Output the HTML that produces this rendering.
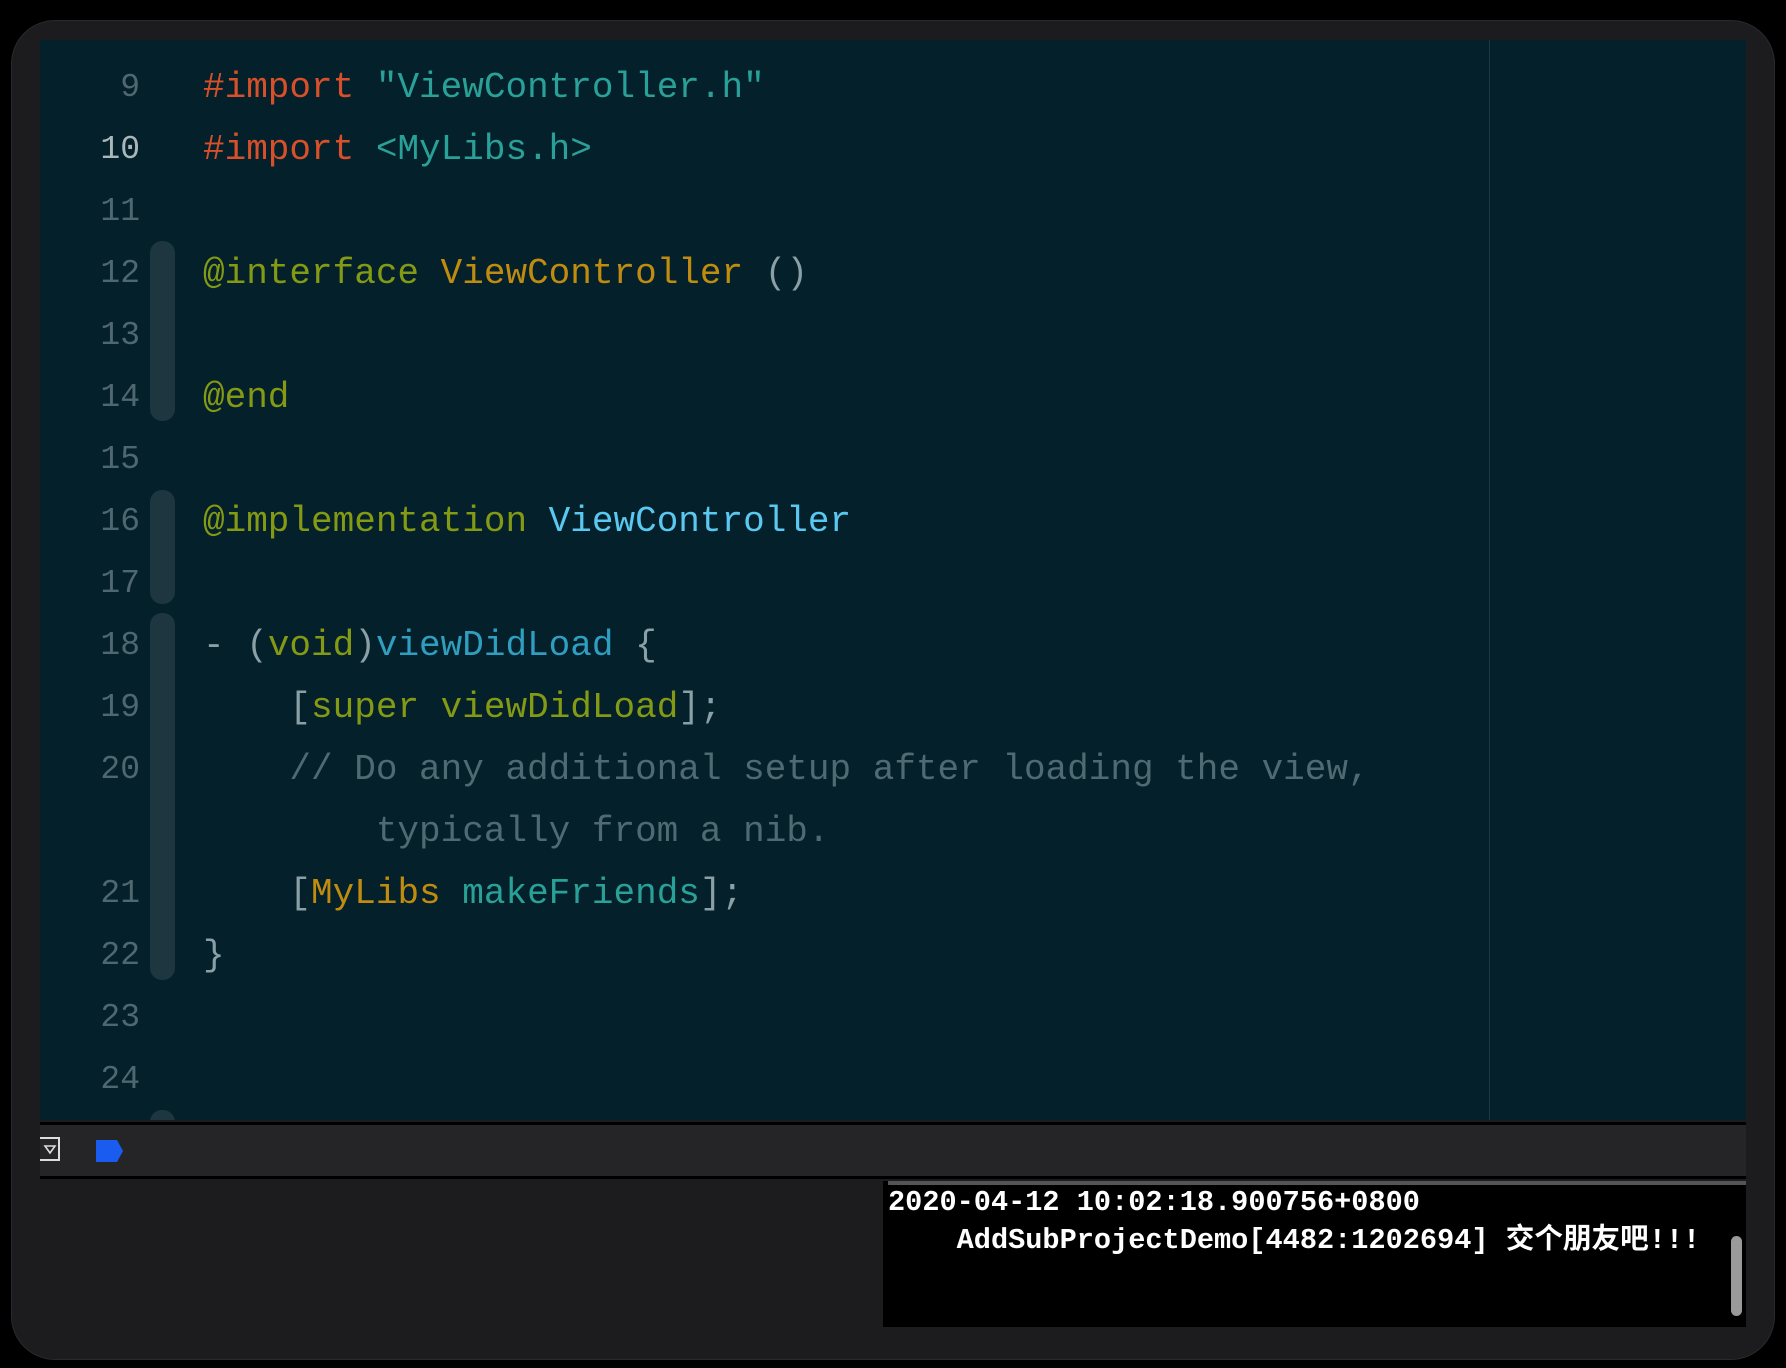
<!DOCTYPE html>
<html><head><meta charset="utf-8"><style>
html,body{margin:0;padding:0;background:#000;}
body{width:1786px;height:1368px;position:relative;overflow:hidden;font-family:"Liberation Mono","Noto Sans CJK SC",monospace;}
.win{position:absolute;left:11px;top:20px;width:1764px;height:1340px;border-radius:44px;background:#1c1c1e;border:1px solid #2a2a2c;box-sizing:border-box;overflow:hidden;}
.editor{position:absolute;left:40px;top:40px;width:1706px;height:1080px;background:#04202a;overflow:hidden;}
.vline{position:absolute;left:1449px;top:0;width:1px;height:1080px;background:#1c3a44;}
.row{position:absolute;left:0;height:62px;line-height:62px;font-size:36px;white-space:pre;}
.ln{position:absolute;width:100px;text-align:right;left:0;color:#4f6770;font-size:33px;}
.code{position:absolute;left:163px;}
.fold{position:absolute;left:110px;width:25px;background:#1d3640;border-radius:12px;}
.r{color:#d8502a}.s{color:#2aa198}.k{color:#849a14}.y{color:#c08c10}.p{color:#8aa0a6}.c{color:#4f6a72}.b{color:#5ac8f0}.m{color:#2f9ec0}.t{color:#2aa198}
.tool{position:absolute;left:40px;top:1122px;width:1706px;height:57px;background:#252528;border-top:3px solid #000;border-bottom:3px solid #000;box-sizing:border-box;}
.left{position:absolute;left:40px;top:1181px;width:843px;height:146px;background:#1c1c1f;}
.con{position:absolute;left:883px;top:1181px;width:863px;height:146px;background:#000;}
.con .bar{position:absolute;left:5px;top:0;width:858px;height:4px;background:#555;}
.ct{position:absolute;left:5px;color:#fff;font-weight:bold;font-size:28.6px;white-space:pre;line-height:38px;font-family:"Liberation Mono","Noto Sans CJK SC",monospace;}
.sb{position:absolute;left:848px;top:55px;width:11px;height:80px;border-radius:6px;background:#9a9a9a;}
</style></head><body>
<div class="win"></div>
<div class="editor">
  <div class="vline"></div>
  <div class="fold" style="top:201px;height:180px"></div>
  <div class="fold" style="top:450px;height:114px"></div>
  <div class="fold" style="top:573px;height:367px"></div>
  <div class="fold" style="top:1070px;height:40px"></div>

  <div class="row" style="top:17px;width:1700px"><span class="ln">9</span><span class="code"><span class="r">#import</span> <span class="s">"ViewController.h"</span></span></div>
  <div class="row" style="top:79px;width:1700px"><span class="ln" style="color:#a9b6ba">10</span><span class="code"><span class="r">#import</span> <span class="s">&lt;MyLibs.h&gt;</span></span></div>
  <div class="row" style="top:141px;width:1700px"><span class="ln">11</span></div>
  <div class="row" style="top:203px;width:1700px"><span class="ln">12</span><span class="code"><span class="k">@interface</span> <span class="y">ViewController</span> <span class="p">()</span></span></div>
  <div class="row" style="top:265px;width:1700px"><span class="ln">13</span></div>
  <div class="row" style="top:327px;width:1700px"><span class="ln">14</span><span class="code"><span class="k">@end</span></span></div>
  <div class="row" style="top:389px;width:1700px"><span class="ln">15</span></div>
  <div class="row" style="top:451px;width:1700px"><span class="ln">16</span><span class="code"><span class="k">@implementation</span> <span class="b">ViewController</span></span></div>
  <div class="row" style="top:513px;width:1700px"><span class="ln">17</span></div>
  <div class="row" style="top:575px;width:1700px"><span class="ln">18</span><span class="code"><span class="p">- (</span><span class="k">void</span><span class="p">)</span><span class="m">viewDidLoad</span> <span class="p">{</span></span></div>
  <div class="row" style="top:637px;width:1700px"><span class="ln">19</span><span class="code">    <span class="p">[</span><span class="k">super</span> <span class="k">viewDidLoad</span><span class="p">];</span></span></div>
  <div class="row" style="top:699px;width:1700px"><span class="ln">20</span><span class="code">    <span class="c">// Do any additional setup after loading the view,</span></span></div>
  <div class="row" style="top:761px;width:1700px"><span class="code">        <span class="c">typically from a nib.</span></span></div>
  <div class="row" style="top:823px;width:1700px"><span class="ln">21</span><span class="code">    <span class="p">[</span><span class="y">MyLibs</span> <span class="t">makeFriends</span><span class="p">];</span></span></div>
  <div class="row" style="top:885px;width:1700px"><span class="ln">22</span><span class="code"><span class="p">}</span></span></div>
  <div class="row" style="top:947px;width:1700px"><span class="ln">23</span></div>
  <div class="row" style="top:1009px;width:1700px"><span class="ln">24</span></div>
</div>
<div class="tool">
  <svg style="position:absolute;left:0;top:11px" width="22" height="26" viewBox="0 0 22 26"><path d="M0 2H19V24H0" fill="none" stroke="#ddd" stroke-width="2"/><path d="M5 10H15L10 17Z" fill="none" stroke="#ddd" stroke-width="1.6"/></svg>
  <svg style="position:absolute;left:54px;top:15px" width="30" height="22" viewBox="0 0 30 22"><path d="M2 0H23L29 11L23 22H2Z" fill="#1a5cf0"/></svg>
</div>
<div class="left"></div>
<div class="con">
  <div class="bar"></div>
  <div class="ct" style="top:3px">2020-04-12 10:02:18.900756+0800</div>
  <div class="ct" style="top:41px">    AddSubProjectDemo[4482:1202694] 交个朋友吧!!!</div>
  <div class="sb"></div>
</div>
</body></html>
